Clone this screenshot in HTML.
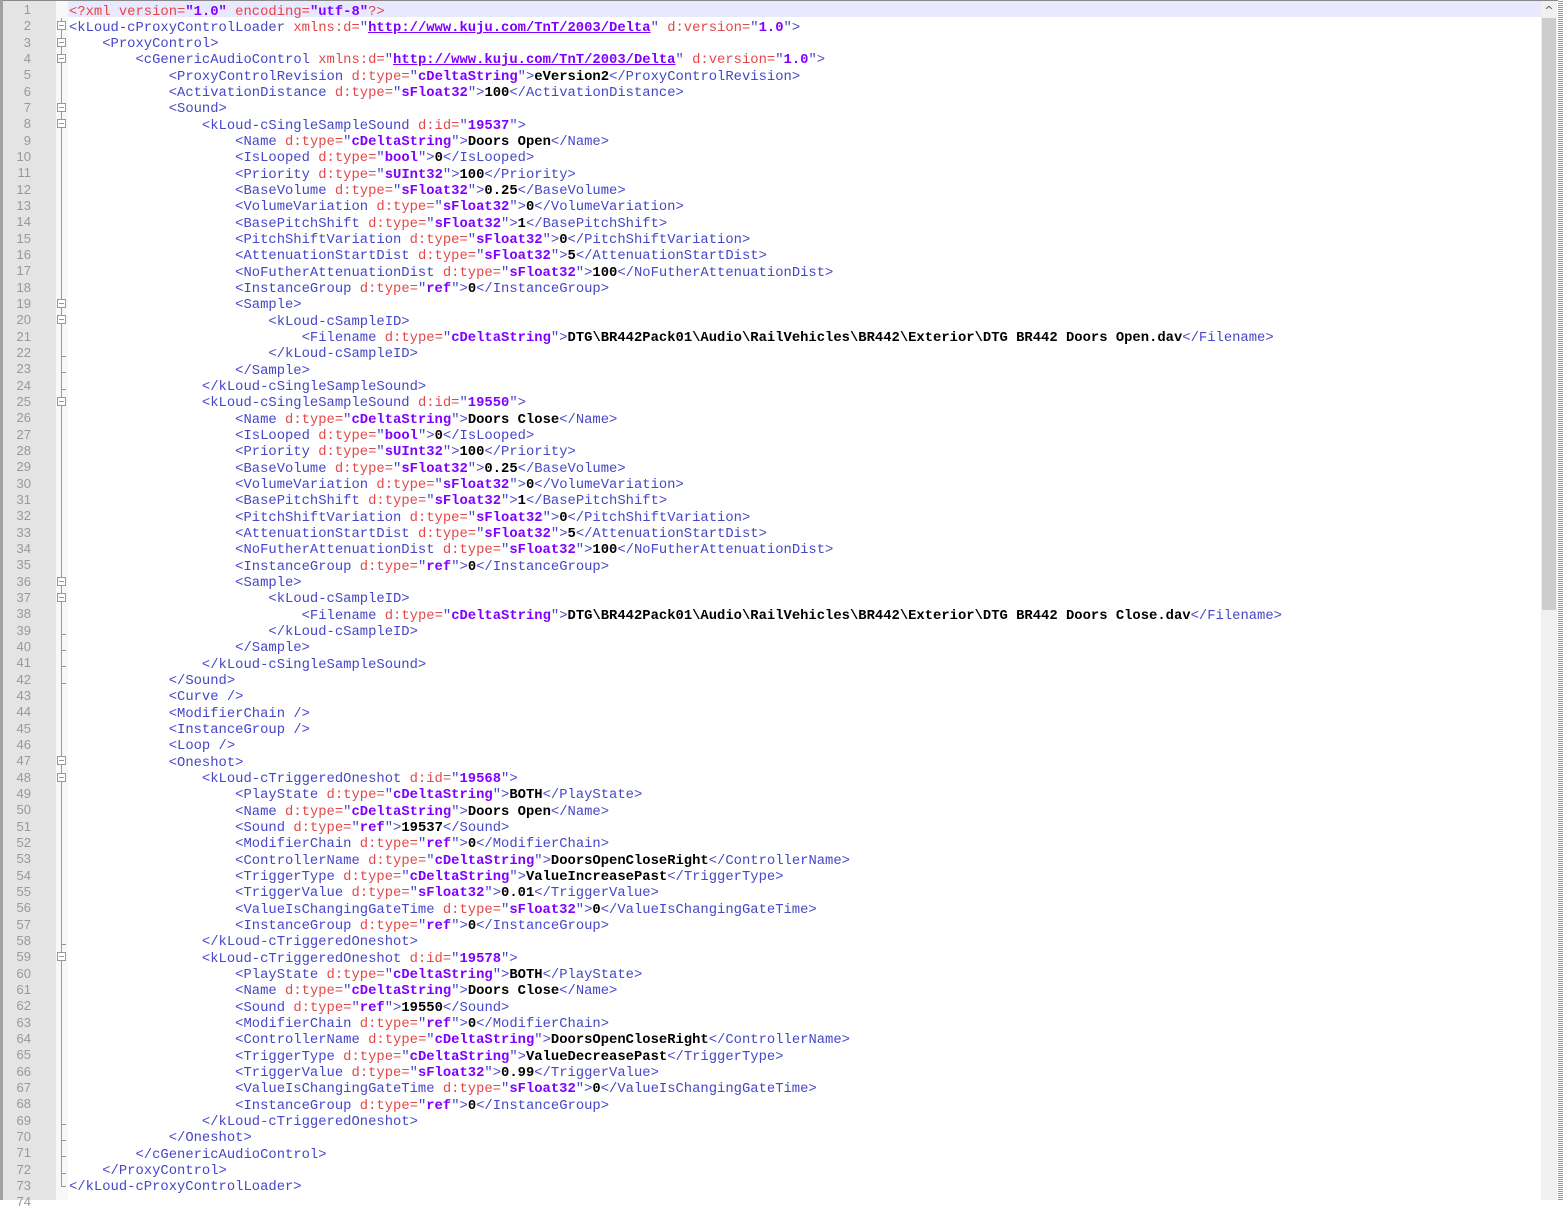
<!DOCTYPE html>
<html><head><meta charset="utf-8"><style>
body{margin:0;width:1563px;height:1200px;overflow:hidden;background:#fff;position:relative;font-family:"Liberation Mono","Courier New",monospace;}
#top{position:absolute;left:0;top:0;width:1563px;height:1px;background:#888}
#lb{position:absolute;left:0;top:0;width:3px;height:1200px;background:#a0a0a0}
#gut{position:absolute;left:3px;top:1px;width:53px;height:1199px;background:#e4e4e4}
#fold{position:absolute;left:56px;top:1px;width:12px;height:1199px;background:#f8f8f8}
#hl{position:absolute;left:68px;top:1px;width:1473px;height:16px;background:#e8e8ff}
#sb{position:absolute;left:1541px;top:1px;width:16px;height:1199px;background:#f0f0f0}
#th{position:absolute;left:1542px;top:18px;width:14px;height:592px;background:#cdcdcd}
#arr{position:absolute;left:1541px;top:1px;width:16px;height:17px;background:#f0f0f0;color:#555;font-size:11px;text-align:center;line-height:20px;font-family:"DejaVu Sans",sans-serif}
#dot{position:absolute;left:1558px;top:0;width:5px;height:1200px;background:repeating-linear-gradient(#fff 0 1px,#999 1px 2px)}
.ln{position:absolute;left:3px;width:28px;text-align:right;font-size:13px;color:#999;font-family:"Liberation Sans",sans-serif}
.L{position:absolute;left:69px;font-size:13.85px;white-space:pre;line-height:16px;color:#000}
.t{color:#4646c8}.a{color:#e24848}.v{color:#8000ff;font-weight:bold}.x{font-weight:bold}.u{text-decoration:underline}
.fv{position:absolute;left:61px;width:1px;background:#999}
.fb{position:absolute;left:57px;width:9px;height:9px;border:1px solid #999;background:#fff;box-sizing:border-box}
.fb:after{content:"";position:absolute;left:1px;right:1px;top:3px;height:1px;background:#999}
.ft{position:absolute;left:61px;width:5px;height:1px;background:#999}
</style></head><body>
<div id="top"></div><div id="lb"></div><div id="gut"></div><div id="fold"></div><div id="hl"></div>
<div id="sb"></div><div id="th"></div><div id="arr">^</div><div id="dot"></div>
<div class="fv" style="top:18px;height:1168px"></div>
<div id="c"></div>
<script>
var T=s=>'<span class="t">'+s+'</span>',A=s=>'<span class="a">'+s+'</span>',V=s=>'<span class="v">'+s+'</span>',X=s=>'<span class="x">'+s+'</span>';
function el(n,ty,val){return T('&lt;'+n)+' '+A('d:type=')+T('"')+V(ty)+T('"')+T('&gt;')+X(val)+T('&lt;/'+n+'&gt;');}
function cl(n){return T('&lt;/'+n+'&gt;')}
function ind(k){return ' '.repeat(4*k)}
var L=[];
L.push('<span class="a">&lt;?xml version=</span><span class="v">"1.0"</span><span class="a"> encoding=</span><span class="v">"utf-8"</span><span class="a">?&gt;</span>');
L.push(T('&lt;kLoud-cProxyControlLoader')+' '+A('xmlns:d=')+T('"')+'<span class="v u">http://www.kuju.com/TnT/2003/Delta</span>'+T('"')+' '+A('d:version=')+T('"')+V('1.0')+T('"&gt;'));
L.push(ind(1)+T('&lt;ProxyControl&gt;'));
L.push(ind(2)+T('&lt;cGenericAudioControl')+' '+A('xmlns:d=')+T('"')+'<span class="v u">http://www.kuju.com/TnT/2003/Delta</span>'+T('"')+' '+A('d:version=')+T('"')+V('1.0')+T('"&gt;'));
L.push(ind(3)+el('ProxyControlRevision','cDeltaString','eVersion2'));
L.push(ind(3)+el('ActivationDistance','sFloat32','100'));
L.push(ind(3)+T('&lt;Sound&gt;'));
function snd(id,name,file){
L.push(ind(4)+T('&lt;kLoud-cSingleSampleSound')+' '+A('d:id=')+T('"')+V(id)+T('"&gt;'));
[['Name','cDeltaString',name],['IsLooped','bool','0'],['Priority','sUInt32','100'],['BaseVolume','sFloat32','0.25'],['VolumeVariation','sFloat32','0'],['BasePitchShift','sFloat32','1'],['PitchShiftVariation','sFloat32','0'],['AttenuationStartDist','sFloat32','5'],['NoFutherAttenuationDist','sFloat32','100'],['InstanceGroup','ref','0']].forEach(e=>L.push(ind(5)+el(e[0],e[1],e[2])));
L.push(ind(5)+T('&lt;Sample&gt;'));L.push(ind(6)+T('&lt;kLoud-cSampleID&gt;'));
L.push(ind(7)+el('Filename','cDeltaString',file));
L.push(ind(6)+cl('kLoud-cSampleID'));L.push(ind(5)+cl('Sample'));L.push(ind(4)+cl('kLoud-cSingleSampleSound'));}
snd('19537','Doors Open','DTG\\BR442Pack01\\Audio\\RailVehicles\\BR442\\Exterior\\DTG BR442 Doors Open.dav');
snd('19550','Doors Close','DTG\\BR442Pack01\\Audio\\RailVehicles\\BR442\\Exterior\\DTG BR442 Doors Close.dav');
L.push(ind(3)+cl('Sound'));
['Curve','ModifierChain','InstanceGroup','Loop'].forEach(n=>L.push(ind(3)+T('&lt;'+n+' /&gt;')));
L.push(ind(3)+T('&lt;Oneshot&gt;'));
function os(id,name,snd,tt,tv){
L.push(ind(4)+T('&lt;kLoud-cTriggeredOneshot')+' '+A('d:id=')+T('"')+V(id)+T('"&gt;'));
[['PlayState','cDeltaString','BOTH'],['Name','cDeltaString',name],['Sound','ref',snd],['ModifierChain','ref','0'],['ControllerName','cDeltaString','DoorsOpenCloseRight'],['TriggerType','cDeltaString',tt],['TriggerValue','sFloat32',tv],['ValueIsChangingGateTime','sFloat32','0'],['InstanceGroup','ref','0']].forEach(e=>L.push(ind(5)+el(e[0],e[1],e[2])));
L.push(ind(4)+cl('kLoud-cTriggeredOneshot'));}
os('19568','Doors Open','19537','ValueIncreasePast','0.01');
os('19578','Doors Close','19550','ValueDecreasePast','0.99');
L.push(ind(3)+cl('Oneshot'));L.push(ind(2)+cl('cGenericAudioControl'));L.push(ind(1)+cl('ProxyControl'));L.push(cl('kLoud-cProxyControlLoader'));
var h='',lh=16.333;
var boxes=[2,3,4,7,8,19,20,25,36,37,47,48,59],ticks=[22,23,24,39,40,41,42,58,69,70,71,72,73];
for(var i=0;i<74;i++){var y=1+lh*i;h+='<div class="ln" style="top:'+(y+1)+'px">'+(i+1)+'</div>';if(i<L.length)h+='<div class="L" style="top:'+(y+2.5)+'px">'+L[i]+'</div>';}
boxes.forEach(n=>{h+='<div class="fb" style="top:'+(1+lh*(n-1)+4)+'px"></div>'});
ticks.forEach(n=>{h+='<div class="ft" style="top:'+(1+lh*(n-1)+(n==73?9:12))+'px"></div>'});
document.getElementById('c').innerHTML=h;
</script>
</body></html>
